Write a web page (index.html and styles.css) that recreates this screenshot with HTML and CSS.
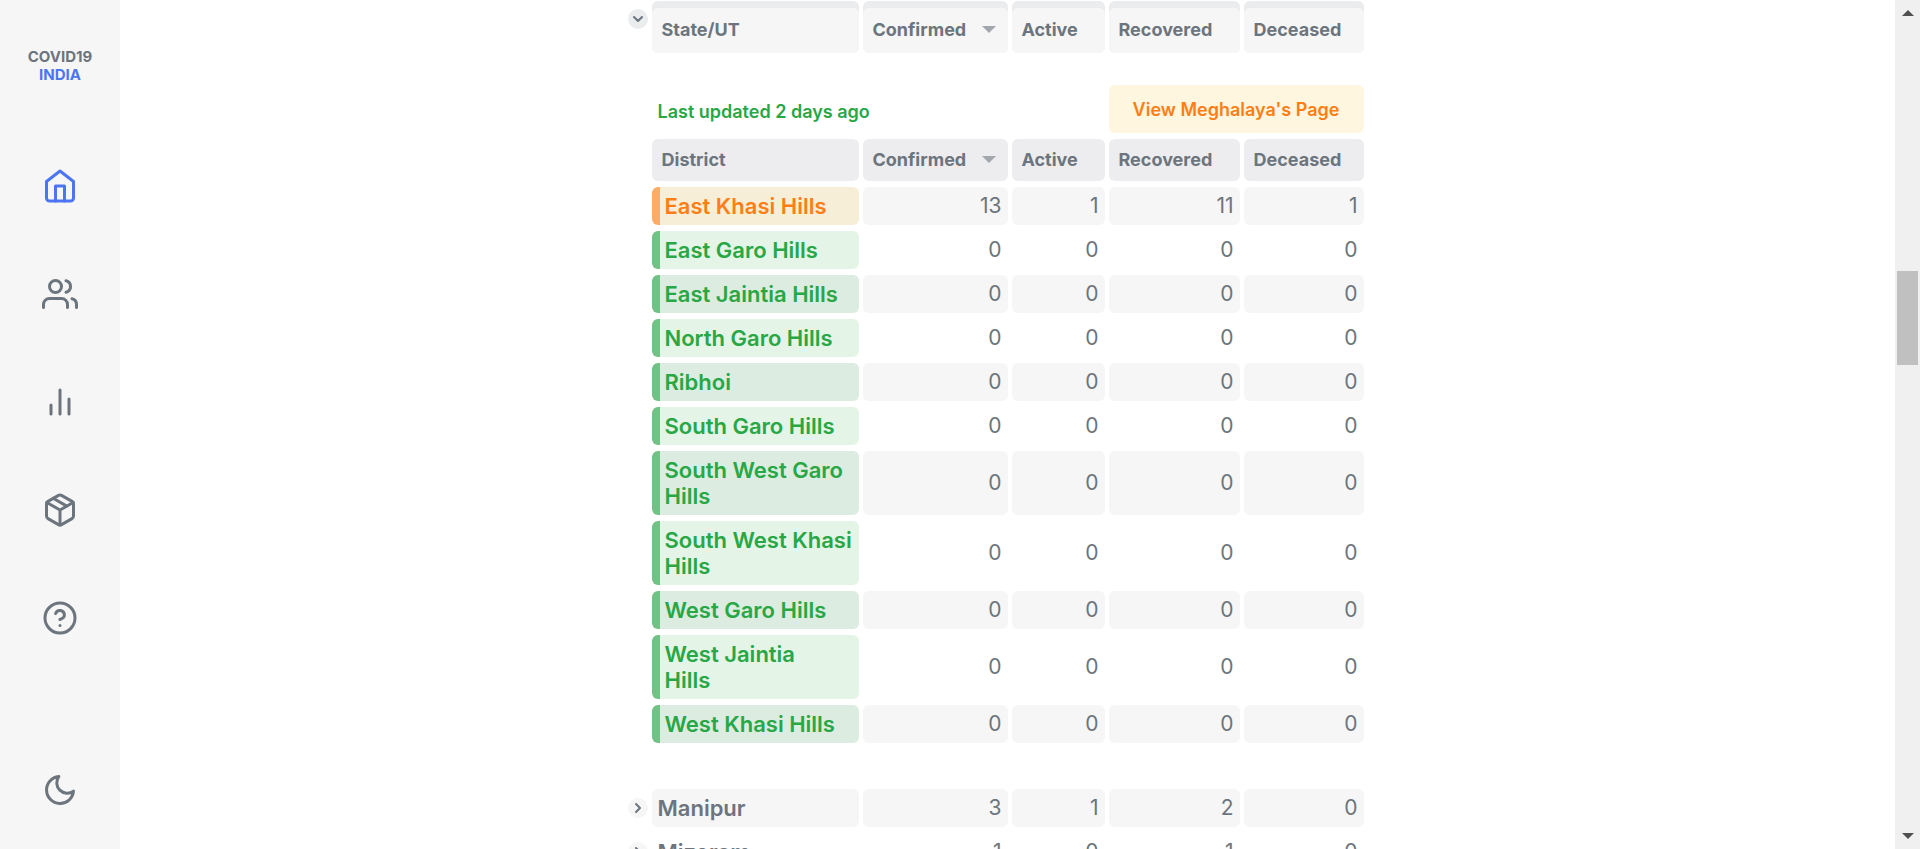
FILE: index.html
```html
<!DOCTYPE html>
<html lang="en">
<head>
<meta charset="utf-8">
<title>COVID19 INDIA</title>
<link rel="stylesheet" href="styles.css">
</head>
<body>
<div class="app">
  <nav class="sidebar" aria-label="Main">
    <a class="logo" href="#"><span>COVID19</span><span class="logo-accent">INDIA</span></a>
    <a class="nav-item active" href="#" aria-label="Home"><svg class="icon" viewBox="0 0 24 24"><path d="M3 9l9-7 9 7v11a2 2 0 0 1-2 2H5a2 2 0 0 1-2-2z"/><path d="M9 22V12h6v10"/></svg></a>
    <a class="nav-item" href="#" aria-label="Demographics"><svg class="icon" viewBox="0 0 24 24"><path d="M17 21v-2a4 4 0 0 0-4-4H5a4 4 0 0 0-4 4v2"/><circle cx="9" cy="7" r="4"/><path d="M23 21v-2a4 4 0 0 0-3-3.87"/><path d="M16 3.13a4 4 0 0 1 0 7.75"/></svg></a>
    <a class="nav-item" href="#" aria-label="Deep dive"><svg class="icon" viewBox="0 0 24 24"><path d="M18 20V10M12 20V4M6 20v-6"/></svg></a>
    <a class="nav-item" href="#" aria-label="Essentials"><svg class="icon" viewBox="0 0 24 24"><path d="M16.5 9.4l-9-5.19"/><path d="M21 16V8a2 2 0 0 0-1-1.73l-7-4a2 2 0 0 0-2 0l-7 4A2 2 0 0 0 3 8v8a2 2 0 0 0 1 1.73l7 4a2 2 0 0 0 2 0l7-4A2 2 0 0 0 21 16z"/><path d="M3.27 6.96L12 12.01l8.73-5.05M12 22.08V12"/></svg></a>
    <a class="nav-item" href="#" aria-label="About"><svg class="icon" viewBox="0 0 24 24"><circle cx="12" cy="12" r="10"/><path d="M9.09 9a3 3 0 0 1 5.83 1c0 2-3 3-3 3"/><path d="M12 17h.01"/></svg></a>
    <button class="nav-item theme" type="button" aria-label="Dark mode"><svg class="icon" viewBox="0 0 24 24"><path d="M21 12.79A9 9 0 1 1 11.21 3 7 7 0 0 0 21 12.79z"/></svg></button>
  </nav>

  <main class="content">
    <div class="table-wrap">
      <table class="cases">
        <colgroup><col class="c-toggle"><col class="c-name"><col class="c-confirmed"><col class="c-active"><col class="c-recovered"><col class="c-deceased"></colgroup>
        <thead>
          <tr class="state-head">
            <td class="toggle-cell"><button class="toggle open" type="button" aria-label="Collapse"><svg viewBox="0 0 24 24"><path d="M6 9l6 6 6-6"/></svg></button></td>
            <th scope="col"><div class="head">State/UT</div></th>
            <th scope="col"><div class="head">Confirmed<span class="sort"></span></div></th>
            <th scope="col"><div class="head">Active</div></th>
            <th scope="col"><div class="head">Recovered</div></th>
            <th scope="col"><div class="head">Deceased</div></th>
          </tr>
        </thead>
        <tbody>
          <tr class="info"><td></td><td class="updated" colspan="3">Last updated 2 days ago</td><td colspan="2"><button class="state-page" type="button">View Meghalaya's Page</button></td></tr>
          <tr class="district-head"><td></td>
            <th scope="col"><div class="head">District</div></th>
            <th scope="col"><div class="head">Confirmed<span class="sort"></span></div></th>
            <th scope="col"><div class="head">Active</div></th>
            <th scope="col"><div class="head">Recovered</div></th>
            <th scope="col"><div class="head">Deceased</div></th>
          </tr>
          <tr class="row odd"><td></td><th scope="row" class="zone orange">East Khasi Hills</th><td>13</td><td>1</td><td>11</td><td>1</td></tr>
          <tr class="row"><td></td><th scope="row" class="zone green">East Garo Hills</th><td>0</td><td>0</td><td>0</td><td>0</td></tr>
          <tr class="row odd"><td></td><th scope="row" class="zone green">East Jaintia Hills</th><td>0</td><td>0</td><td>0</td><td>0</td></tr>
          <tr class="row"><td></td><th scope="row" class="zone green">North Garo Hills</th><td>0</td><td>0</td><td>0</td><td>0</td></tr>
          <tr class="row odd"><td></td><th scope="row" class="zone green">Ribhoi</th><td>0</td><td>0</td><td>0</td><td>0</td></tr>
          <tr class="row"><td></td><th scope="row" class="zone green">South Garo Hills</th><td>0</td><td>0</td><td>0</td><td>0</td></tr>
          <tr class="row odd"><td></td><th scope="row" class="zone green">South West Garo<br>Hills</th><td>0</td><td>0</td><td>0</td><td>0</td></tr>
          <tr class="row"><td></td><th scope="row" class="zone green">South West Khasi<br>Hills</th><td>0</td><td>0</td><td>0</td><td>0</td></tr>
          <tr class="row odd"><td></td><th scope="row" class="zone green">West Garo Hills</th><td>0</td><td>0</td><td>0</td><td>0</td></tr>
          <tr class="row"><td></td><th scope="row" class="zone green">West Jaintia<br>Hills</th><td>0</td><td>0</td><td>0</td><td>0</td></tr>
          <tr class="row odd"><td></td><th scope="row" class="zone green">West Khasi Hills</th><td>0</td><td>0</td><td>0</td><td>0</td></tr>
          <tr class="spacer"><td colspan="6"></td></tr>
          <tr class="row odd"><td class="toggle-cell"><button class="toggle" type="button" aria-label="Expand Manipur"><svg viewBox="0 0 24 24"><path d="M9 18l6-6-6-6"/></svg></button></td><th scope="row" class="state">Manipur</th><td>3</td><td>1</td><td>2</td><td>0</td></tr>
          <tr class="row"><td class="toggle-cell"><button class="toggle" type="button" aria-label="Expand Mizoram"><svg viewBox="0 0 24 24"><path d="M9 18l6-6-6-6"/></svg></button></td><th scope="row" class="state">Mizoram</th><td>1</td><td>0</td><td>1</td><td>0</td></tr>
        </tbody>
      </table>
    </div>
  </main>

  <div class="scrollbar" aria-hidden="true">
    <svg class="arrow" viewBox="0 0 12 6"><path d="M0 6L6 0l6 6z"/></svg>
    <div class="track"><div class="thumb"></div></div>
    <svg class="arrow" viewBox="0 0 12 6"><path d="M0 0l6 6 6-6z"/></svg>
  </div>
</div>
</body>
</html>
```
FILE: styles.css
```css
* { box-sizing: border-box; }

body {
  margin: 0;
  background: #fff;
  color: #6c757d;
  font-family: Inter, "Liberation Sans", sans-serif;
}

button {
  border: 0;
  padding: 0;
  color: inherit;
  font-family: inherit;
  cursor: pointer;
}

.app {
  display: flex;
  height: 100vh;
  overflow: hidden;
}

.sidebar {
  flex: none;
  display: flex;
  flex-direction: column;
  align-items: center;
  gap: 72px;
  width: 120px;
  padding: 48px 0 41px;
  background: #f6f6f6;
}

.logo {
  display: flex;
  flex-direction: column;
  align-items: center;
  margin-bottom: 12px;
  color: #6c757d;
  font-size: 15px;
  font-weight: 700;
  line-height: 18px;
  text-decoration: none;
}

.logo-accent { color: #4c75f2; }

.nav-item {
  display: block;
  width: 36px;
  height: 36px;
  background: none;
  color: #6c757d;
}

.nav-item.active { color: #4c75f2; }

.theme { margin-top: auto; }

.icon,
.toggle svg {
  display: block;
  fill: none;
  stroke: currentColor;
  stroke-width: 2;
  stroke-linecap: round;
  stroke-linejoin: round;
}

.icon {
  width: 36px;
  height: 36px;
}

.content {
  flex: 1;
  min-width: 0;
  overflow: hidden;
}

.table-wrap {
  max-width: 768px;
  margin: -5px auto 0;
  padding-right: 24px;
}

.cases {
  width: 100%;
  table-layout: fixed;
  border-collapse: separate;
  border-spacing: 4px 6px;
}

.c-toggle { width: 20px; }
.c-name { width: 207px; }
.c-confirmed { width: 145px; }
.c-active { width: 93px; }
.c-recovered { width: 131px; }
.c-deceased { width: 120px; }

.cases th,
.cases td {
  padding: 0;
  border-radius: 6px;
}

.head {
  display: flex;
  align-items: center;
  justify-content: space-between;
  padding: 0 12px 2px 10px;
  border-radius: 6px;
  font-size: 18px;
  font-weight: 700;
}

.state-head th {
  padding-top: 7px;
  background: #ebecee;
}

.state-head .head {
  height: 45px;
  background: #f6f6f6;
}

.district-head .head {
  height: 42px;
  background: #ededef;
}

.sort {
  border: 7px solid transparent;
  border-top-color: #a2a7ad;
  border-bottom: 0;
}

.cases .toggle-cell { vertical-align: middle; }

.cases .state-head .toggle-cell {
  padding-top: 8px;
  vertical-align: top;
}

.toggle {
  display: grid;
  place-items: center;
  width: 20px;
  height: 20px;
  border-radius: 50%;
  background: #f6f6f6;
}

.toggle.open { background: #ebecee; }

.toggle svg {
  width: 16px;
  height: 16px;
  stroke-width: 3;
}

.cases .info td { padding-top: 26px; }

.cases .info .updated {
  padding-top: 30px;
  padding-left: 6px;
  color: #28a745;
  font-size: 18px;
  font-weight: 600;
  vertical-align: middle;
}

.state-page {
  display: block;
  width: 100%;
  height: 48px;
  border-radius: 6px;
  background: #fff6e0;
  color: #fd7e14;
  font-size: 18px;
  font-weight: 600;
}

.row th,
.row td {
  font-size: 21px;
  line-height: 26px;
}

.cases .row th {
  padding: 6px 0 6px 6px;
  font-size: 22px;
  font-weight: 600;
  text-align: left;
  white-space: nowrap;
}

.cases .row td:nth-child(n + 3) {
  padding-right: 6px;
  text-align: right;
}

.row.odd .state,
.row.odd td:nth-child(n + 3) { background: #f6f6f6; }

.cases .row .zone {
  padding-left: 5px;
  border-left: 8px solid;
}

.cases .row .green {
  border-left-color: #71c285;
  background: #e4f4e6;
  color: #28a745;
}

.cases .row.odd .green { background: #dcece0; }

.cases .row .orange {
  border-left-color: #fdac66;
  background: #f7eed8;
  color: #fd7e14;
}

.spacer td { height: 34px; }

.scrollbar {
  flex: none;
  display: flex;
  flex-direction: column;
  align-items: center;
  width: 25px;
  padding: 10px 0;
  background: #f0f0f0;
}

.arrow {
  width: 12px;
  height: 6px;
  fill: #505050;
}

.track {
  flex: 1;
  width: 21px;
  padding-top: 255px;
}

.thumb {
  height: 94px;
  background: #c0c0c0;
}
```
